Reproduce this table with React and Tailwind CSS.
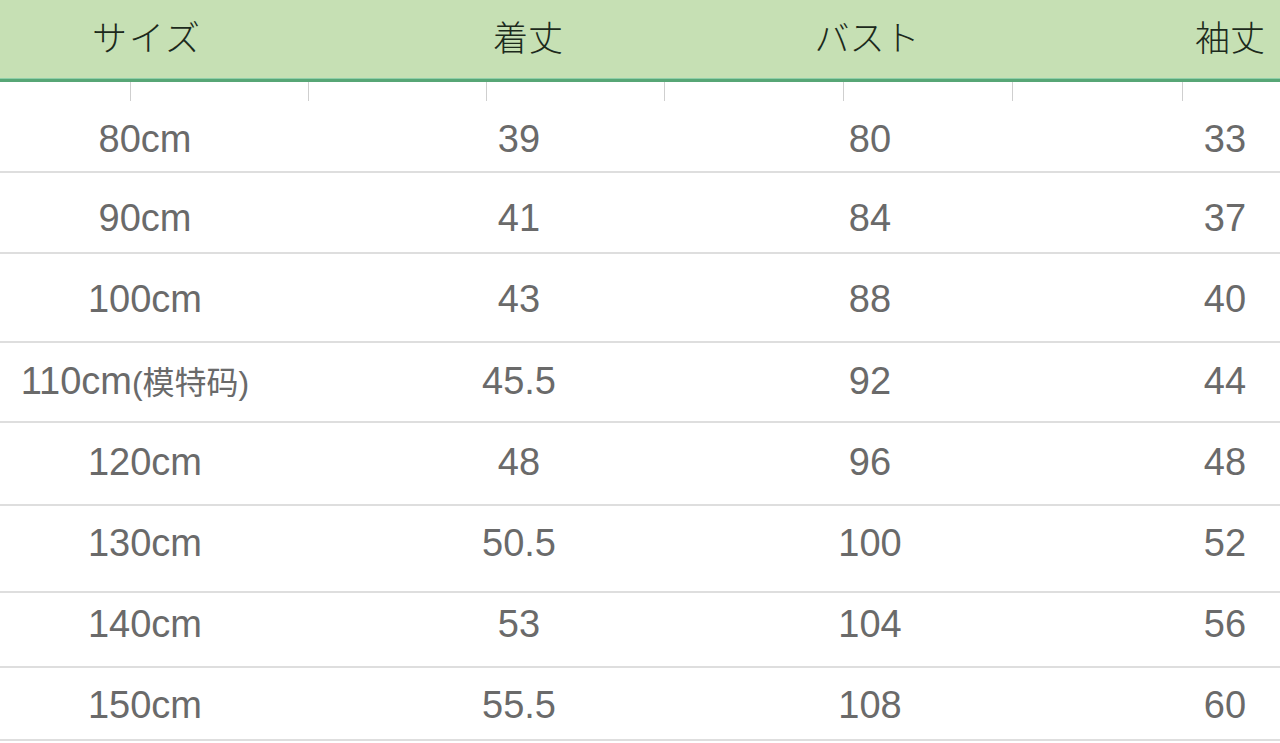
import React from "react";

const rows = [
  { size: "80cm", len: "39", bust: "80", sleeve: "33", box: "h-[72px] pt-[18px]" },
  { size: "90cm", len: "41", bust: "84", sleeve: "37", box: "h-[81px] pt-[25px]" },
  { size: "100cm", len: "43", bust: "88", sleeve: "40", box: "h-[89px] pt-[25px]" },
  { size: "110cm(模特码)", len: "45.5", bust: "92", sleeve: "44", box: "h-[80px] pt-[18px]" },
  { size: "120cm", len: "48", bust: "96", sleeve: "48", box: "h-[83px] pt-[19px]" },
  { size: "130cm", len: "50.5", bust: "100", sleeve: "52", box: "h-[87px] pt-[17px]" },
  { size: "140cm", len: "53", bust: "104", sleeve: "56", box: "h-[75px] pt-[11px]" },
  { size: "150cm", len: "55.5", bust: "108", sleeve: "60", box: "h-[73px] pt-[17px]" },
];

function App() {
  return (
    <div className="w-[1280px] h-[743px] overflow-hidden bg-white">
      {/* header */}
      <div className="h-[78px] bg-[#c6e0b4] grid grid-cols-[294px_468px_210px_516px] items-center pb-[6px] font-['Noto_Sans_CJK_JP',sans-serif] font-light text-[35px] text-[#1c2a1c]">
        <div className="text-center tracking-[2px]">サイズ</div>
        <div className="text-center">着丈</div>
        <div className="text-center">バスト</div>
        <div className="text-center">袖丈</div>
      </div>
      <div className="h-px bg-[#8fcfa8]" />
      <div className="h-[3px] bg-[#57a676]" />

      {/* tick marks */}
      <div className="h-[19px] flex items-start">
        <div className="ml-[130px] w-px h-[19px] bg-[#cfcfcf]" />
        <div className="ml-[177px] w-px h-[19px] bg-[#cfcfcf]" />
        <div className="ml-[177px] w-px h-[19px] bg-[#cfcfcf]" />
        <div className="ml-[177px] w-px h-[19px] bg-[#cfcfcf]" />
        <div className="ml-[178px] w-px h-[19px] bg-[#cfcfcf]" />
        <div className="ml-[168px] w-px h-[19px] bg-[#cfcfcf]" />
        <div className="ml-[169px] w-px h-[19px] bg-[#cfcfcf]" />
      </div>

      {/* body */}
      <div className="font-['Liberation_Sans','Noto_Sans_CJK_SC',sans-serif] text-[38px] text-[#6a6a6a]">
        {rows.map((r) => (
          <div
            key={r.size}
            className={`${r.box} border-b-2 border-[#dedede] grid grid-cols-[290px_458px_244px_466px]`}
          >
            <div className="text-center leading-[40px] h-[40px]">
              {r.size.includes("(") ? (
                <span className="-ml-[20px]">
                  110cm<span className="text-[32px]">(模特码)</span>
                </span>
              ) : (
                r.size
              )}
            </div>
            <div className="text-center leading-[40px] h-[40px]">{r.len}</div>
            <div className="text-center leading-[40px] h-[40px]">{r.bust}</div>
            <div className="text-center leading-[40px] h-[40px]">{r.sleeve}</div>
          </div>
        ))}
      </div>
    </div>
  );
}

export default App;
